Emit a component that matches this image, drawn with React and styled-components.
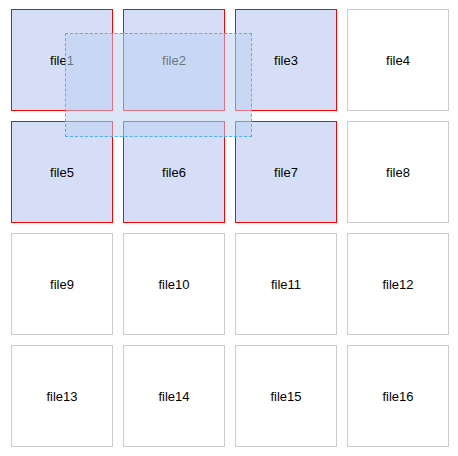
import React from 'react';
import styled, { createGlobalStyle } from 'styled-components';

const GlobalStyle = createGlobalStyle`
  body {
    margin: 0;
    background: #fff;
    font-family: "Liberation Sans", Arial, sans-serif;
  }
`;

const Board = styled.div`
  position: relative;
  padding: 9px 0 0 11px;
  user-select: none;
`;

const Grid = styled.div`
  display: grid;
  grid-template-columns: repeat(4, 102px);
  grid-auto-rows: 102px;
  gap: 10px;
`;

const FileCell = styled.div`
  box-sizing: border-box;
  display: flex;
  align-items: center;
  justify-content: center;
  font-size: 13px;
  color: #000;
  border: 1px solid ${({ selected }) => (selected ? '#ff0000' : '#cccccc')};
  background: ${({ selected }) => (selected ? '#d6def7' : '#ffffff')};
`;

const Marquee = styled.div`
  position: absolute;
  box-sizing: border-box;
  left: 65px;
  top: 33px;
  width: 187px;
  height: 104px;
  border: 1px dashed #55b0f2;
  background: rgba(190, 210, 240, 0.55);
`;

const files = Array.from({ length: 16 }, (_, i) => 'file' + (i + 1));
const selected = ['file1', 'file2', 'file3', 'file5', 'file6', 'file7'];

const App = () => {
  return (
    <>
      <GlobalStyle />
      <Board>
        <Grid>
          {files.map((f) => (
            <FileCell key={f} selected={selected.includes(f)}>
              {f}
            </FileCell>
          ))}
        </Grid>
        <Marquee />
      </Board>
    </>
  );
};

export default App;
